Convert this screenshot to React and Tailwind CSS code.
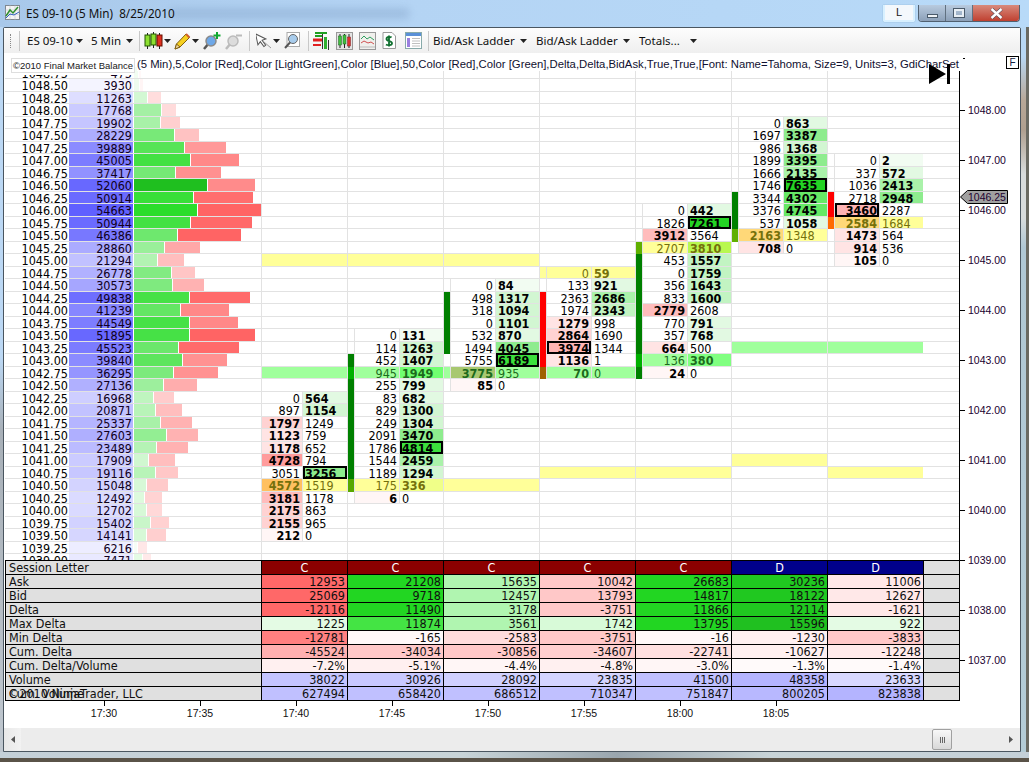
import React from "react";

const G1='#f2fcf2',G2='#e2f9e2',G3='#d2f6d2',G4='#c2f4c2',G5='#aaf2aa',G6='#8eec8e',G7='#66e866',G8='#3ce03c',G9='#24d424';
const R1='#fff6f6',R2='#ffe4e4',R3='#ffd2d2',R4='#ffbcbc',R5='#ff9c9c';
const Y='#ffff99', GB='#a0ff9c', ORG='#ffd878';

const levels=[
['1048.75',475,138,141],['1048.50',3930,139,143],['1048.25',11263,147,161],['1048.00',17768,161,176],['1047.75',19902,160,180],
['1047.50',28229,174,199],['1047.25',39889,184,226],['1047.00',45005,190,239],['1046.75',37417,175,221],['1046.50',52060,207,255],
['1046.25',50914,193,253],['1046.00',54663,197,261],['1045.75',50944,190,252],['1045.50',46386,177,241],['1045.25',28860,164,200],
['1045.00',21294,157,184],['1044.75',26778,171,195],['1044.50',30573,172,204],['1044.25',49838,189,250],['1044.00',41239,180,229],
['1043.75',44549,189,238],['1043.50',51895,189,255],['1043.25',45523,178,239],['1043.00',39840,182,227],['1042.75',36295,173,218],
['1042.50',27136,163,197],['1042.25',16968,153,174],['1042.00',20871,155,182],['1041.75',25337,160,192],['1041.50',27603,166,198],
['1041.25',23489,156,188],['1041.00',17909,148,175],['1040.75',19116,155,178],['1040.50',15048,146,168],['1040.25',12492,144,162],
['1040.00',12702,146,162],['1039.75',15402,150,169],['1039.50',14141,146,166],['1039.25',6216,137,147],['1039.00',7471,142,151],
];

// price, bid, ask, bold side, bid colour, ask colour, outlined
const bars=[
{w:'w-[86px]',bid:'w-[40px]',ask:'w-[44px]',cells:[
['1042.25',0,564,'a','',G2],['1042.00',897,1154,'a','',G3],['1041.75',1797,1249,'b',R3,''],['1041.50',1123,759,'b',R2,''],
['1041.25',1178,652,'b',R2,''],['1041.00',4728,794,'b',R5,''],['1040.75',3051,3256,'a','',G6,1],['1040.50',4572,1519,'b','#ffc060',Y],
['1040.25',3181,1178,'b',R4,''],['1040.00',2175,863,'b',R3,''],['1039.75',2155,965,'b',R3,''],['1039.50',212,0,'b',R1,''],
]},
{candle:{'1043.00':'#008000','1042.75':'#00b000','1042.50':'#008000','1042.25':'#008000','1042.00':'#008000','1041.75':'#008000','1041.50':'#008000','1041.25':'#008000','1041.00':'#008000','1040.75':'#008000','1040.50':'#58a800'},cells:[
['1043.50',0,131,'a','',G1],['1043.25',114,1263,'a','',G3],['1043.00',452,1407,'a','',G3],['1042.75',945,1949,'a','','#70ff70'],
['1042.50',255,799,'a','',G2],['1042.25',83,682,'a','',G2],['1042.00',829,1300,'a','',G3],['1041.75',249,1304,'a','',G3],
['1041.50',2091,3470,'a','',G6],['1041.25',1786,4814,'a','',G8,1],['1041.00',1544,2459,'a','',G5],['1040.75',1189,1294,'a','',G3],
['1040.50',175,336,'a',Y,'#f0ff88'],['1040.25',6,0,'b',R1,''],
]},
{candle:{'1044.25':'#008000','1044.00':'#008000','1043.75':'#008000','1043.50':'#008000','1043.25':'#008000'},cells:[
['1044.50',0,84,'a','',G1],['1044.25',498,1317,'a','',G3],['1044.00',318,1094,'a','',G3],['1043.75',0,1101,'a','',G3],
['1043.50',532,870,'a','',G2],['1043.25',1494,4045,'a','',G6],['1043.00',5755,6189,'a','',G8,1],['1042.75',3775,935,'b','#a8c870',''],
['1042.50',85,0,'b',R1,''],
]},
{candle:{'1044.25':'#ff0000','1044.00':'#ff0000','1043.75':'#ff0000','1043.50':'#ff0000','1043.25':'#ff0000','1043.00':'#ff0000','1042.75':'#a06000'},cells:[
['1044.75',0,59,'a',Y,Y],['1044.50',133,921,'a','',G2],['1044.25',2363,2686,'a','',G5],['1044.00',1974,2343,'a','',G4],
['1043.75',1279,998,'b',R2,''],['1043.50',2864,1690,'b',R3,''],['1043.25',3974,1344,'b','#ffb4b4','',1],['1043.00',1136,1,'b',R2,''],
['1042.75',70,0,'b','',''],
]},
{candle:{'1045.25':'#60b000','1045.00':'#008000','1044.75':'#008000','1044.50':'#008000','1044.25':'#008000','1044.00':'#008000','1043.75':'#008000','1043.50':'#008000','1043.25':'#008000','1043.00':'#00b000','1042.75':'#008000'},cells:[
['1046.00',0,442,'a','',G2],['1045.75',1826,7261,'a','',G9,1],['1045.50',3912,3564,'b',R4,''],['1045.25',2707,3810,'a',Y,'#b8f850'],
['1045.00',453,1557,'a','',G4],['1044.75',0,1759,'a','',G4],['1044.50',356,1643,'a','',G4],['1044.25',833,1600,'a','',G4],
['1044.00',2779,2608,'b',R4,''],['1043.75',770,791,'a','',G2],['1043.50',357,768,'a','',G2],['1043.25',664,500,'b',R2,''],
['1043.00',136,380,'a','','#80ff80'],['1042.75',24,0,'b',R1,''],
]},
{candle:{'1046.25':'#008000','1046.00':'#008000','1045.75':'#008000','1045.50':'#60b000'},cells:[
['1047.75',0,863,'a','',G2],['1047.50',1697,3387,'a','',G6],['1047.25',986,1368,'a','',G3],['1047.00',1899,3395,'a','',G6],
['1046.75',1666,2135,'a','',G5],['1046.50',1746,7635,'a','',G9,1],['1046.25',3344,4302,'a','',G7],['1046.00',3376,4745,'a','',G7],
['1045.75',537,1058,'a','',G2],['1045.50',2163,1348,'b',ORG,Y],['1045.25',708,0,'b',R2,''],
]},
{candle:{'1046.25':'#ff0000','1046.00':'#ff0000','1045.75':'#ff6a00'},cells:[
['1047.00',0,2,'a','',G1],['1046.75',337,572,'a','',G2],['1046.50',1036,2413,'a','',G5],['1046.25',2718,2948,'a','',G6],
['1046.00',3460,2287,'b','#ffb4b4','',1],['1045.75',2584,1684,'b',ORG,Y],['1045.50',1473,564,'b',R2,''],['1045.25',914,536,'b',R2,''],
['1045.00',105,0,'b',R1,''],
]},
];

const bands={
'1045.00':{0:Y,1:Y,2:Y},'1044.75':{3:Y},'1040.50':{0:Y,1:Y,2:Y},'1041.00':{5:Y},'1040.75':{3:Y,4:Y,6:Y},
'1042.75':{0:GB,1:GB,2:GB,3:GB},'1043.00':{4:GB},'1043.25':{5:GB,6:GB},
};

const dimRows={0:['1040.50'],1:['1042.75','1040.50'],2:['1042.75'],3:['1044.75','1042.75'],4:['1045.25','1043.00'],5:['1045.50'],6:['1045.75']};
const OUTLINE='relative -mt-px -mb-px pt-px shadow-[inset_0_0_0_2px_#000]';

function volBg(v){const c=Math.round(255-159*v/54663);return `rgb(${c},${c},255)`;}
function greenBg(w,price){if(price==='1046.50')return '#1fbf1f';const t=Math.min(w/63,1);const c=Math.round(255-212*t);return `rgb(${c},${Math.round(255-34*t)},${c})`;}
function redBg(w){const c=Math.round(255-155*Math.min(w/64,1));return `rgb(255,${c},${c})`;}

function BarCell({bar,idx,price}){
  const band=(bands[price]||{})[idx];
  const row=bar.cells.find(c=>c[0]===price);
  const candle=bar.candle&&bar.candle[price];
  const dim=row&&(dimRows[idx]||[]).includes(price);
  const isGreenBand=band===GB;
  const dimText=dim?(isGreenBand?'text-[#1c6a1c]':'text-[#74700c]'):'text-black';
  return (
    <div className={`flex shrink-0 border-l border-[#e2e2e2] ${bar.w||'w-[96px]'}`} style={band?{backgroundColor:band}:undefined}>
      {idx>0&&<div className="w-[6px] shrink-0 -mb-px relative" style={candle?{backgroundColor:candle}:undefined}/>}
      {row&&(
        <div className="flex flex-1 min-w-0">
          {idx>0&&<div className="w-px shrink-0 bg-[#e2e2e2]"/>}
          <div className={`${bar.bid||'w-[44px]'} shrink-0 text-right pr-[2px] ${dimText} ${row[3]==='b'?'font-bold':''} ${row[6]&&row[3]==='b'?OUTLINE:''}`} style={row[4]?{backgroundColor:row[4]}:undefined}>{row[1]}</div>
          <div className="w-px shrink-0 bg-[#e2e2e2]"/>
          <div className={`flex-1 pl-[2px] ${dimText} ${row[3]==='a'?'font-bold':''} ${row[6]&&row[3]==='a'?OUTLINE:''}`} style={row[5]?{backgroundColor:row[5]}:undefined}>{row[2]}</div>
        </div>
      )}
    </div>
  );
}

function PriceRow({level}){
  const [price,vol,g,r]=level;
  return (
    <div className="flex h-[12.5px] border-b border-[#e2e2e2] leading-[14px] w-[954px] shrink-0">
      <div className="w-[64px] shrink-0 text-right pr-[1px] text-black bg-white">{price}</div>
      <div className="w-[64px] shrink-0 text-right pr-[1px] text-[#100020]" style={{backgroundColor:volBg(vol)}}>{vol}</div>
      <div className="w-[128px] shrink-0 flex pl-px">
        <div style={{width:g-134,backgroundColor:greenBg(g-134,price)}}/>
        <div className="border-l border-white" style={{width:r-g,backgroundColor:redBg(r-g)}}/>
      </div>
      {bars.map((b,i)=><BarCell key={i} bar={b} idx={i} price={price}/>)}
    </div>
  );
}

const tableRows=[
['Session Letter',[['C','#8b0000'],['C','#8b0000'],['C','#8b0000'],['C','#8b0000'],['C','#8b0000'],['D','#00008b'],['D','#00008b']]],
['Ask',[['12953','#ff6868'],['21208','#22d622'],['15635','#b0f5b0'],['10042','#ffc8c8'],['26683','#22d622'],['30236','#20c820'],['11006','#ffe8e8']]],
['Bid',[['25069','#ff6868'],['9718','#22d622'],['12457','#b0f5b0'],['13793','#ffc8c8'],['14817','#22d622'],['18122','#20c820'],['12627','#ffe8e8']]],
['Delta',[['-12116','#ff6868'],['11490','#22d622'],['3178','#b0f5b0'],['-3751','#ffc8c8'],['11866','#22d622'],['12114','#20c820'],['-1621','#ffe8e8']]],
['Max Delta',[['1225','#e4fbe4'],['11874','#44e444'],['3561','#b0f5b0'],['1742','#d8fad8'],['13795','#22d622'],['15596','#20c020'],['922','#e4fbe4']]],
['Min Delta',[['-12781','#ff8080'],['-165','#fff8f8'],['-2583','#ffdcdc'],['-3751','#ffc8c8'],['-16','#fff8f8'],['-1230','#fff0f0'],['-3833','#ffc8c8']]],
['Cum. Delta',[['-45524','#ffb0b0'],['-34034','#ffc8c8'],['-30856','#ffc8c8'],['-34607','#ffd0d0'],['-22741','#ffe0e0'],['-10627','#fff0f0'],['-12248','#ffeaea']]],
['Cum. Delta/Volume',[['-7.2%','#fff0f0'],['-5.1%','#fff0f0'],['-4.4%','#fff6f6'],['-4.8%','#fff0f0'],['-3.0%','#fff6f6'],['-1.3%','#fffafa'],['-1.4%','#fffafa']]],
['Volume',[['38022','#c4c4ff'],['30926','#c8c8ff'],['28092','#d0d0ff'],['23835','#d4d4ff'],['41500','#c0c0ff'],['48358','#b4b4ff'],['23633','#d8d8ff']]],
['Cum. Volume',[['627494','#c0c0ff'],['658420','#c0c0ff'],['686512','#c0c0ff'],['710347','#c0c0ff'],['751847','#c0c0ff'],['800205','#b8b8ff'],['823838','#b4b4ff']]],
];

const Caret=()=>(<svg width="7" height="4" viewBox="0 0 7 4" className="shrink-0"><path d="M0 0h7L3.5 4z" fill="#222"/></svg>);
const Sep=()=>(<div className="w-px h-[20px] bg-[#c8c8c8] shrink-0"/>);

const IconCandles=()=>(<svg width="19" height="18" viewBox="0 0 19 18" className="shrink-0"><path d="M3.5 1v16M9.5 0v16M15.5 1v16" stroke="#222"/><rect x="1" y="3" width="5" height="11" fill="#8de030" stroke="#225500"/><rect x="7" y="2" width="5" height="11" fill="#8de030" stroke="#225500"/><rect x="13" y="3" width="5" height="11" fill="#e03020" stroke="#661100"/></svg>);
const IconPencil=()=>(<svg width="17" height="18" viewBox="0 0 17 18" className="shrink-0"><path d="M1 17l1.5-5L12 2l3.5 3.5L6 15z" fill="#f6d020" stroke="#806010"/><path d="M1 17l1.5-5L6 15z" fill="#f0d8a0" stroke="#806010"/><path d="M12 2l3.5 3.5" stroke="#d06030" strokeWidth="2"/></svg>);
const IconZoomPlus=()=>(<svg width="18" height="18" viewBox="0 0 18 18" className="shrink-0"><path d="M6 11l-5 6" stroke="#555" strokeWidth="2.5"/><circle cx="8" cy="9" r="5" fill="#6ea8e8" stroke="#8a8a8a" strokeWidth="1.5"/><path d="M14 0v7M10.5 3.5h7" stroke="#10a830" strokeWidth="2"/></svg>);
const IconZoomGray=()=>(<svg width="18" height="18" viewBox="0 0 18 18" className="shrink-0"><path d="M6 11l-5 6" stroke="#bbb" strokeWidth="2.5"/><circle cx="8" cy="9" r="5" fill="#dcdcdc" stroke="#bbb" strokeWidth="1.5"/><path d="M11 3.5h6" stroke="#bbb" strokeWidth="2"/></svg>);
const IconCursor=()=>(<svg width="16" height="17" viewBox="0 0 16 17" className="shrink-0"><path d="M1 1v11l3-2.5 2.5 5.5 2-1L6 8.5l4-.5z" transform="rotate(-12 5 8)" fill="#fff" stroke="#555"/><path d="M8 10l7 6" stroke="#999"/></svg>);
const IconMag=()=>(<svg width="16" height="17" viewBox="0 0 16 17" className="shrink-0"><rect x="3" y="0.5" width="12.5" height="14" fill="#fff" stroke="#aaa"/><circle cx="9" cy="7" r="4.5" fill="#a8ccec" stroke="#666"/><path d="M6 10.5L1 16" stroke="#555" strokeWidth="2"/></svg>);
const IconStyle1=()=>(<svg width="18" height="18" viewBox="0 0 18 18" className="shrink-0"><path d="M3 1h12M3 4h8" stroke="#20a020" strokeWidth="2"/><path d="M1 8h9" stroke="#e02020" strokeWidth="3"/><path d="M1 13h8" stroke="#e02020" strokeWidth="2"/><rect x="12" y="5" width="3" height="12" fill="#30b030"/><path d="M10.5 2v15M16.5 8v10" stroke="#333"/></svg>);
const IconStyle2=()=>(<svg width="17" height="18" viewBox="0 0 17 18" className="shrink-0"><rect x="0.5" y="0.5" width="16" height="17" fill="#e4e4e4" stroke="#999"/><path d="M4 2v14M8.5 2v14M13 2v14" stroke="#222"/><rect x="2.5" y="4" width="3" height="9" fill="#40c040" stroke="#206020" strokeWidth=".5"/><rect x="7" y="3" width="3" height="9" fill="#40c040" stroke="#206020" strokeWidth=".5"/><rect x="11.5" y="5" width="3" height="9" fill="#e03030" stroke="#802020" strokeWidth=".5"/></svg>);
const IconStyle3=()=>(<svg width="17" height="18" viewBox="0 0 17 18" className="shrink-0"><rect x="0.5" y="0.5" width="16" height="17" fill="#f0f0ec" stroke="#999"/><path d="M2 7l3-3 3 3 3-2 4 3" fill="none" stroke="#30a060"/><path d="M2 11l3-2 4 2 3-1 3 2" fill="none" stroke="#d05050"/><path d="M1 15h15" stroke="#bbb"/></svg>);
const IconDollar=()=>(<svg width="14" height="17" viewBox="0 0 14 17" className="shrink-0"><path d="M1 .5h9l3.5 3.5v12.5H1z" fill="#fff" stroke="#999"/><path d="M9.5 5.5C8.5 4.5 4.5 4.5 4.5 7c0 2.600 5.500 1.500 5.500 4.200C10 13.500 5.500 13.500 4 12.500M7 3.500v11" fill="none" stroke="#107030" strokeWidth="1.800"/></svg>);
const IconDoc=()=>(<svg width="17" height="17" viewBox="0 0 17 17" className="shrink-0"><rect x="0.5" y="0.5" width="16" height="16" fill="#fff" stroke="#8aa"/><rect x="1" y="1" width="15" height="3" fill="#5a90d8"/><rect x="2" y="6" width="3" height="9" fill="#9a80e0"/><path d="M7 6.500h8M7 9h8M7 11.500h8M7 14h8" stroke="#c0c0c0"/></svg>);
const IconTitle=()=>(<svg width="15" height="15" viewBox="0 0 15 15" className="shrink-0"><rect x="0.5" y="0.5" width="14" height="14" fill="#f4f4f4" stroke="#808890"/><path d="M0.500 5h14M0.500 9.500h14M5 .5v14M10 .5v14" stroke="#c8ccd4" strokeWidth=".7"/><path d="M1 11l4-6 3 3 5-6" fill="none" stroke="#2f8f2f" strokeWidth="1.500"/><path d="M1 13l4-4 4 1 5-3" fill="none" stroke="#3060c0" strokeWidth="1"/></svg>);

const axisPrices=['1048.00','1047.00','1046.00','1045.00','1044.00','1043.00','1042.00','1041.00','1040.00','1039.00','1038.00','1037.00'];
const times=['17:30','17:35','17:40','17:45','17:50','17:55','18:00','18:05'];
const ui="font-['Noto_Sans','Open_Sans',sans-serif]";
const cond="font-['DejaVu_Sans',sans-serif] [font-stretch:condensed]";
const arial="font-['Liberation_Sans',Arial,sans-serif]";

export default function App(){
  return (
    <div className="relative w-[1029px] h-[762px] overflow-hidden flex flex-col bg-[linear-gradient(90deg,#a8c8ea_0%,#b4d4f4_40%,#b8daf8_100%)]">
      {/* title bar */}
      <div className="relative h-[27px] shrink-0 flex items-start pl-[5px] pt-[5px]">
        <div className="absolute left-[170px] right-[620px] top-[9px] h-[9px] bg-[#90b0d4] blur-[4px] opacity-70"/>
        <IconTitle/>
        <span className={`relative ml-[6px] text-[11.7px] leading-[16px] text-[#101010] whitespace-pre ${ui}`}>ES 09-10 (5 Min)  8/25/2010</span>
        <div className="ml-auto mr-[9px] flex items-start relative">
          <div className={`w-[32px] h-[17px] border-2 border-t-0 border-[#d8f0ff] bg-[#f4f8fc] rounded-b-[2px] text-center text-[11px] leading-[14px] text-[#222] mr-[3px] shadow-[0_0_1px_#5080a0] ${arial}`}>L</div>
          <div className="flex h-[17px] rounded-b-[4px] overflow-hidden border border-t-0 border-[#506070]">
            <div className="w-[27px] border-r border-[#607080] flex items-center justify-center bg-[linear-gradient(#b8cade,#8ca0b8)]"><div className="w-[11px] h-[4px] mt-[6px] bg-[#eef2f6] border border-[#4a5a6a]"/></div>
            <div className="w-[27px] border-r border-[#607080] flex items-center justify-center bg-[linear-gradient(#b8cade,#8ca0b8)]"><div className="w-[10px] h-[8px] bg-transparent border-2 border-[#e8eef4] shadow-[0_0_0_1px_#4a5a6a]"/></div>
            <div className="w-[46px] flex items-center justify-center bg-[linear-gradient(#d88a7c,#c04030)]">
              <svg width="13" height="11" viewBox="0 0 13 11"><path d="M1.500 1l10 9M11.500 1l-10 9" stroke="#445" strokeWidth="3.600"/><path d="M1.500 1l10 9M11.500 1l-10 9" stroke="#fff" strokeWidth="2.400"/></svg>
            </div>
          </div>
        </div>
      </div>

      {/* window body + glass borders */}
      <div className="flex-1 flex min-h-0">
        <div className="w-[3px] shrink-0 bg-[linear-gradient(#bcd8f4_0%,#bcd8f4_45%,#a8b0b8_55%,#c0c8d0_100%)]"/>
        <div className="w-[1018px] shrink-0 h-[725px] border border-[#4a5660] rounded-t-[2px] bg-white flex flex-col">
          {/* toolbar */}
          <div className={`h-[25px] shrink-0 flex items-center bg-[linear-gradient(#fdfdfd,#efefef)] text-[11.5px] text-[#101010] pl-[3px] ${ui}`}>
            <div className="w-px h-[14px] border-l border-dotted border-[#888] ml-[3px] mr-[8px] shrink-0"/>
            <Sep/>
            <span className="ml-[7px] w-[43px] whitespace-nowrap">ES 09-10</span><span className="ml-[6px]"><Caret/></span>
            <span className="ml-[8px] w-[30px] whitespace-nowrap">5 Min</span><span className="ml-[5px]"><Caret/></span>
            <div className="ml-[6px]"><Sep/></div>
            <div className="ml-[4px]"><IconCandles/></div><span className="ml-px"><Caret/></span>
            <div className="ml-[3px]"><IconPencil/></div><span className="ml-px"><Caret/></span>
            <div className="ml-[4px]"><IconZoomPlus/></div>
            <div className="ml-[4px]"><IconZoomGray/></div>
            <div className="ml-[6px]"><Sep/></div>
            <div className="ml-[6px]"><IconCursor/></div><span className="ml-px"><Caret/></span>
            <div className="ml-[4px]"><IconMag/></div>
            <div className="ml-[8px]"><Sep/></div>
            <div className="ml-[3px]"><IconStyle1/></div>
            <div className="ml-[6px]"><IconStyle2/></div>
            <div className="ml-[6px]"><IconStyle3/></div>
            <div className="ml-[6px]"><IconDollar/></div>
            <div className="ml-[9px]"><IconDoc/></div>
            <div className="ml-[6px]"><Sep/></div>
            <span className="ml-[4px] w-[80px] whitespace-nowrap">Bid/Ask Ladder</span><span className="ml-[7px]"><Caret/></span>
            <span className="ml-[9px] w-[80px] whitespace-nowrap">Bid/Ask Ladder</span><span className="ml-[7px]"><Caret/></span>
            <span className="ml-[9px] w-[42px] whitespace-nowrap">Totals...</span><span className="ml-[9px]"><Caret/></span>
          </div>

          {/* chart + axis */}
          <div className="relative flex shrink-0 h-[648px] pl-px">
            <div className="w-[954px] shrink-0 flex flex-col">
              <div className={`h-[507px] shrink-0 overflow-hidden pt-[13.5px] text-[12.5px] ${cond}`}>
                {levels.map(l=><PriceRow key={l[0]} level={l}/>)}
              </div>
              <div className={`w-[955px] shrink-0 relative border-t border-l border-black grid grid-cols-[256px_86px_96px_96px_96px_96px_96px_96px_36px] text-[12.5px] leading-[13px] ${cond}`}>
                {tableRows.map(([label,vals],ri)=>(
                  <React.Fragment key={label}>
                    <div className="h-[14px] bg-[#e0e0e0] border-r border-b border-black pl-[3px] text-[#101010] whitespace-nowrap">{label}</div>
                    {vals.map(([v,c],ci)=>(
                      <div key={ci} className={`h-[14px] border-r border-b border-black ${ri===0?'text-center text-white':'text-right pr-[2px] text-[#101010]'}`} style={{backgroundColor:c}}>{v}</div>
                    ))}
                    <div className="h-[14px] bg-[#e0e0e0] border-r border-b border-black"/>
                  </React.Fragment>
                ))}
                <span className={`absolute left-[2px] bottom-0 text-[12.5px] leading-[14px] text-[#101010] whitespace-nowrap ${cond}`}>©2010 NinjaTrader, LLC</span>
              </div>
            </div>
            <div className={`relative w-[61px] shrink-0 pt-[5px] ${arial}`}>
              <div className="h-[643px] border-l border-black pt-[27px] text-[10.5px] text-[#200030]">
                <div className="absolute left-0 top-[5px] w-[6px] h-px bg-black"/>
                {axisPrices.map(p=>(
                  <div key={p} className="h-[50px] flex items-center">
                    <div className="w-[5px] h-px bg-black"/>
                    <span className="ml-[3px] leading-[12px]">{p}</span>
                  </div>
                ))}
              </div>
              {/* last price flag */}
              <div className="absolute left-[1px] top-[137px] flex items-center">
                <svg width="61" height="14" viewBox="0 0 61 14" className="absolute left-0 top-0"><path d="M0.500 7L7.500 .5H47.500V13.500H7.500z" fill="#a0a0a0" stroke="#000"/></svg>
                <span className="relative ml-[8px] text-[10.5px] leading-[14px] text-[#200030]">1046.25</span>
              </div>
            </div>

            {/* overlays */}
            <div className={`absolute left-[133px] top-0 w-[826px] h-[18px] pt-[4px] bg-white text-[11.3px] leading-[14px] text-[#101030] whitespace-nowrap overflow-hidden ${arial}`}>(5 Min),5,Color [Red],Color [LightGreen],Color [Blue],50,Color [Red],Color [Green],Delta,Delta,BidAsk,True,True,[Font: Name=Tahoma, Size=9, Units=3, GdiCharSet</div>
            <div className="absolute left-px top-[4px] w-[129px] h-[18px] bg-white"/>
            <div className={`absolute left-[7px] top-[5px] w-[124px] h-[15px] border border-[#dedede] bg-white text-[9.5px] leading-[13px] text-center text-[#202020] whitespace-nowrap ${arial}`}>©2010 Final Market Balance</div>
            <svg width="22" height="20" viewBox="0 0 22 20" className="absolute left-[925px] top-[11px]"><path d="M0 0l17 10L0 20z" fill="#000"/><rect x="18" y="0" width="3" height="20" fill="#000"/></svg>
            <div className={`absolute left-[1002px] top-[3px] w-[13px] h-[13px] border border-black bg-white text-[10px] leading-[11px] text-center text-[#102040] ${arial}`}>F</div>
          </div>

          {/* time axis */}
          <div className={`h-[27px] shrink-0 flex pl-[52px] text-[10.5px] text-[#101010] ${arial}`}>
            {times.map(t=>(
              <div key={t} className="w-[96px] shrink-0 flex flex-col items-center">
                <div className="w-px h-[5px] bg-black"/>
                <span className="mt-[1px] leading-[12px]">{t}</span>
              </div>
            ))}
          </div>

          {/* scrollbar */}
          <div className="h-[23px] shrink-0 bg-[#ececec] flex items-center">
            <div className="w-[17px] h-full bg-[linear-gradient(90deg,#e8e8e8,#f2f2f2)] flex items-center justify-center pl-px">
              <svg width="4" height="7" viewBox="0 0 4 7"><path d="M4 0v7L0 3.500z" fill="#555"/></svg>
            </div>
            <div className="ml-auto mr-[57px] w-[20px] h-[21px] rounded-[2px] border border-[#a0a0a0] bg-[linear-gradient(#f8f8f8,#d8d8d8)] flex items-center justify-center gap-px">
              <div className="w-px h-[6px] bg-[#666]"/><div className="w-px h-[6px] bg-[#666]"/><div className="w-px h-[6px] bg-[#666]"/>
            </div>
            <svg width="4" height="7" viewBox="0 0 4 7" className="mr-[7px]"><path d="M0 0v7L4 3.500z" fill="#555"/></svg>
          </div>
        </div>
        <div className="flex-1 bg-[linear-gradient(#b8d8f4_0,#b8d8f4_4%,#b8a898_10%,#b0a090_14%,#d8dcdc_20%,#d8dcdc_26%,#b0c8d4_30%,#b4ccd6_100%)] border-r-[3px] border-[#6a6a62]"/>
      </div>

      {/* bottom glass edge */}
      <div className="absolute left-0 right-0 top-[752px] h-[6px] bg-[linear-gradient(90deg,#c4d0d8,#c8d4d8_45%,#9aa6ae_60%,#c8d4d8_75%,#c4d0d8)]"/>
      <div className="absolute left-0 right-0 top-[758px] h-[4px] bg-[#5a5348]"/>
    </div>
  );
}
